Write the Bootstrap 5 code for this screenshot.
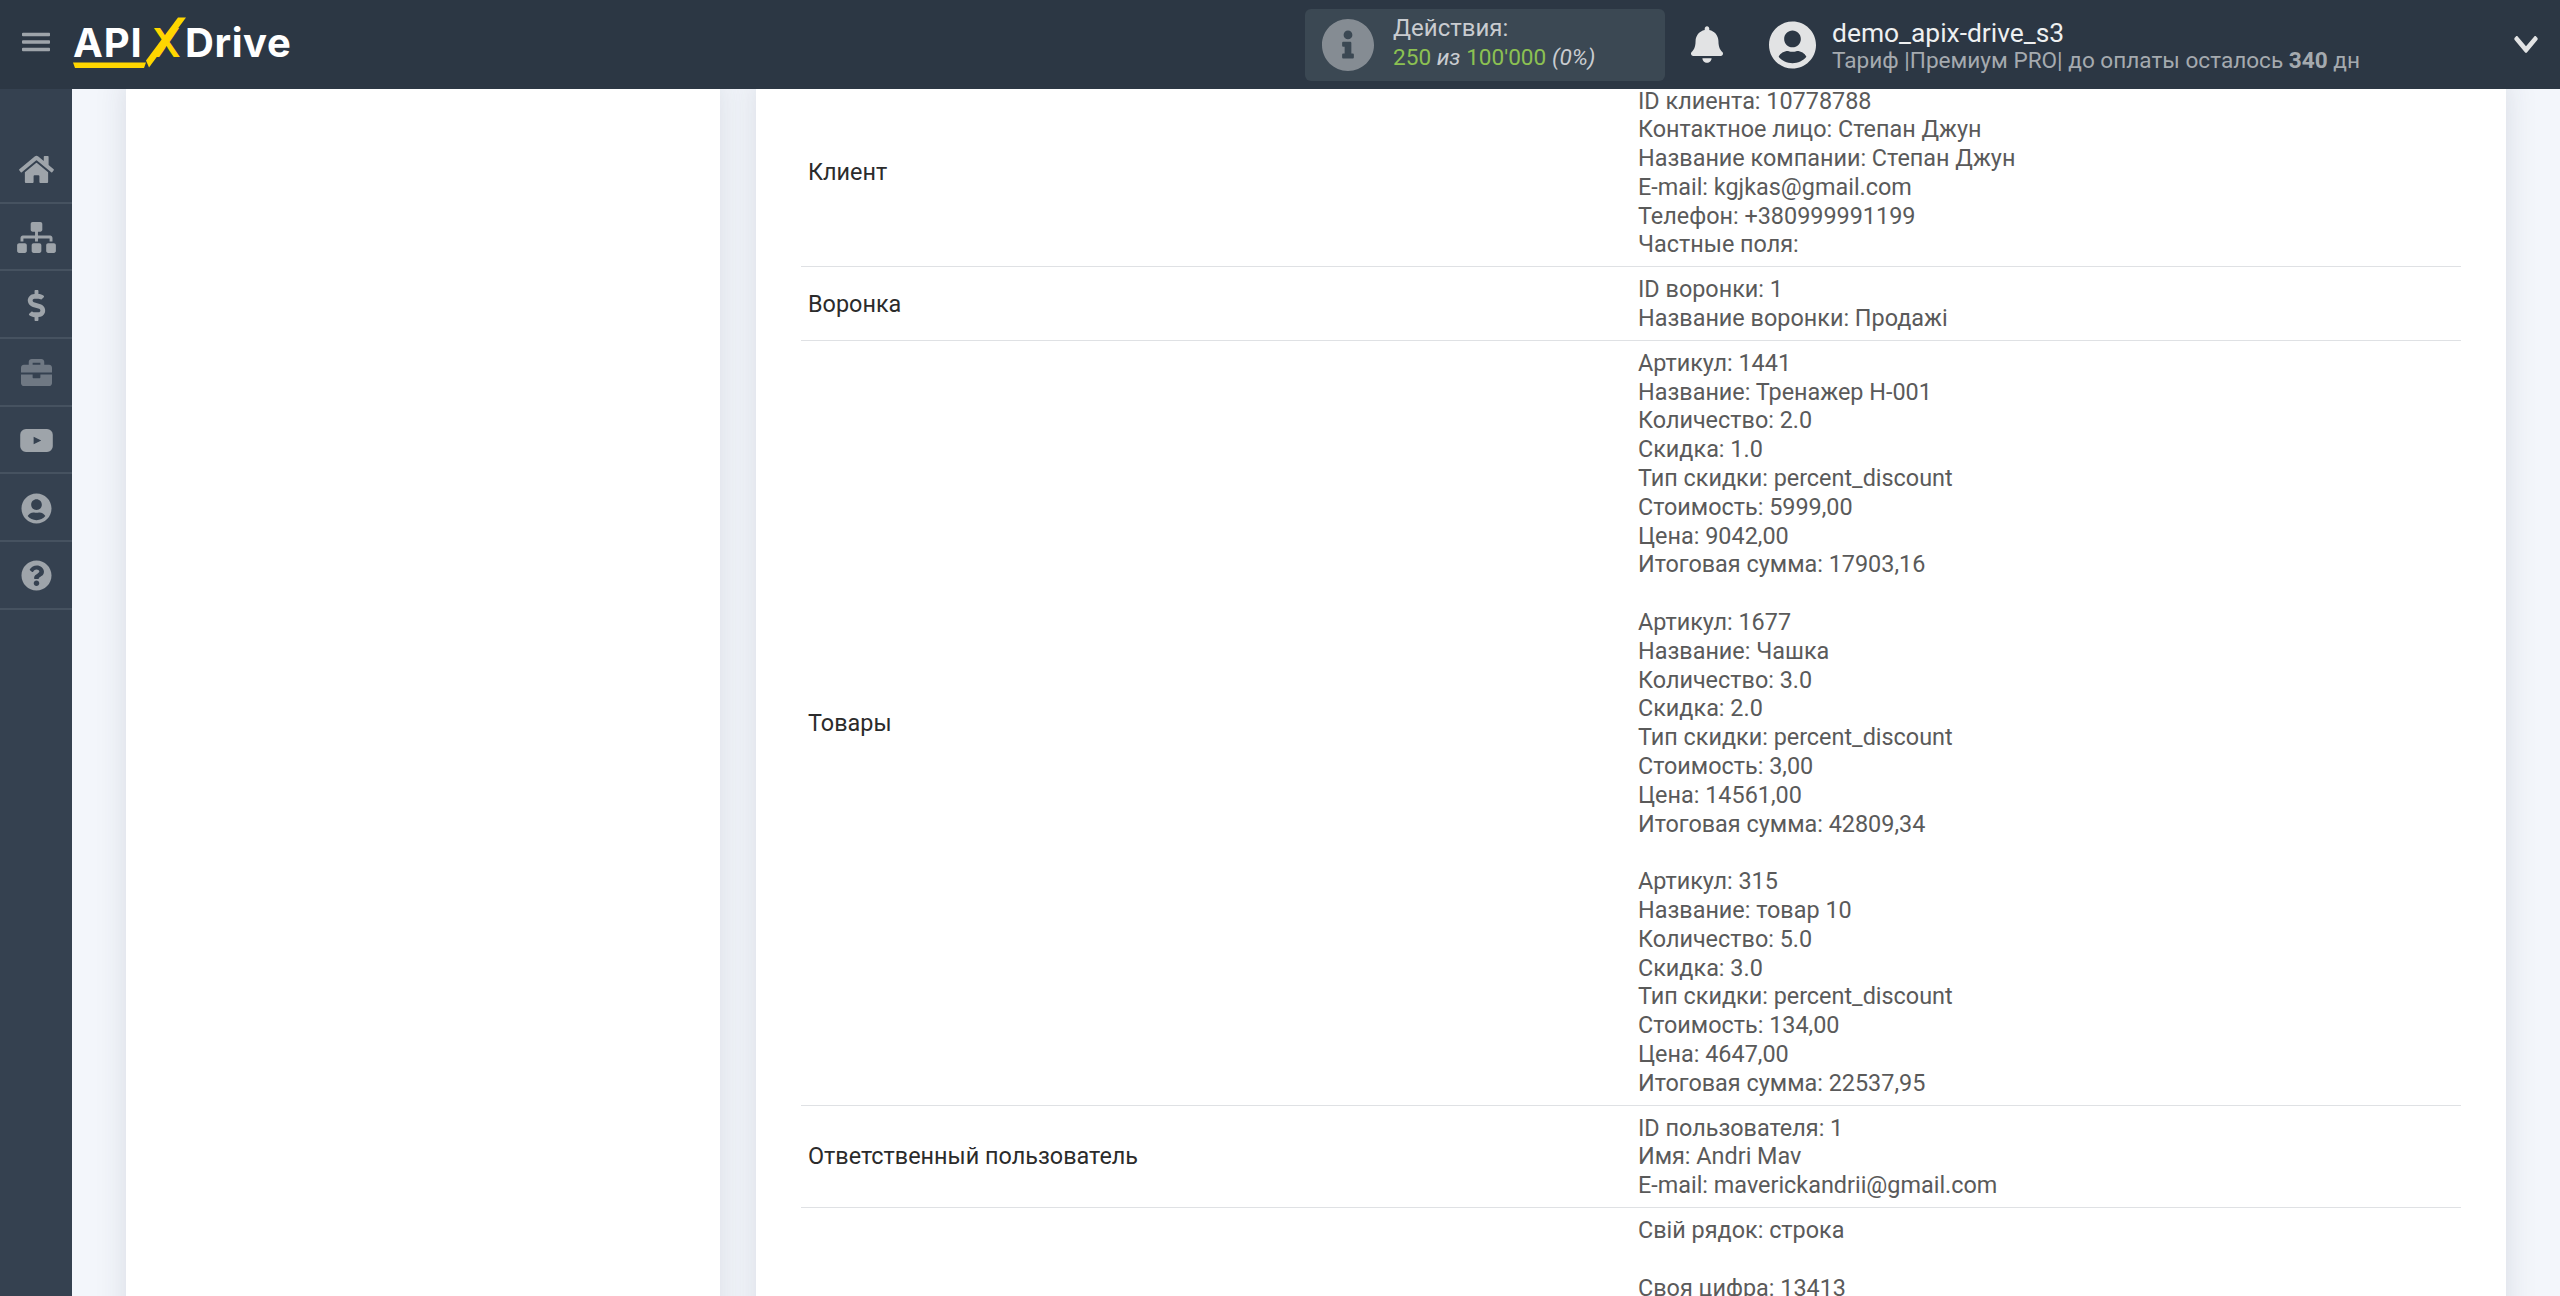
<!DOCTYPE html>
<html lang="ru">
<head>
  <meta charset="UTF-8">
  <meta name="viewport" content="width=device-width, initial-scale=1.0">
  <title>ApiX-Drive</title>
  <link href="https://cdn.jsdelivr.net/npm/bootstrap@5.3.0/dist/css/bootstrap.min.css" rel="stylesheet">
  <style>
    html, body { height: 100%; overflow: hidden; }
    body { font-family: Roboto, "Liberation Sans", sans-serif; background: #f3f6fb; }
    .app-shell { height: 1296px; }
    .top-bar { height: 89px; background: #2c3744; flex: none; position: relative; z-index: 2; }
    .burger { width: 28px; height: 24px; margin: -5px 0 0 22px; fill: #9ea4aa; flex: none; }
    .brand { position: relative; width: 220px; height: 64px; margin-left: 22px; padding-left: 1px; flex: none; font-family: Inter, "Open Sans", sans-serif; font-weight: 700; font-size: 40px; line-height: 60px; color: #fff; }
    .brand-api { width: 79px; letter-spacing: .8px; }
    .brand-x { width: 33px; color: #ffd600; font-weight: 600; }
    .brand-word { letter-spacing: .6px; }
    .brand-art { position: absolute; left: 0; top: 0; width: 220px; height: 64px; }
    .stat-box { width: 360px; height: 72px; margin-left: 1013px; background: #3b4853; border-radius: 6px; padding-left: 17px; flex: none; }
    .stat-icon { width: 52px; height: 52px; fill: #858c93; flex: none; }
    .stat-text { margin-left: 19px; padding-bottom: 3px; font-size: 22.6px; line-height: 29px; color: #c9ccd0; }
    .stat-title { font-size: 24px; }
    .stat-num { color: #8cc152; }
    .bell { width: 32px; height: 37px; margin-left: 26px; fill: #e2e3e4; flex: none; }
    .avatar { width: 47px; height: 48px; margin-left: 46px; fill: #e2e3e4; flex: none; }
    .user-text { margin-left: 16px; padding-top: 4px; line-height: 27px; }
    .user-name { font-size: 26.4px; color: #eef0f1; }
    .user-plan { font-size: 22.6px; color: #a5aaaf; }
    .chevron { width: 24px; height: 33px; margin-left: auto; margin-right: 22px; fill: #e2e3e4; flex: none; }
    .side-bar { width: 72px; background: #354150; padding-top: 47px; flex: none; }
    .side-item { height: 67.7px; padding-top: 2px; border-bottom: 2px solid #465260; }
    .side-icon { fill: #9ea4aa; height: 31px; width: 39px; }
    .side-icon.dim { fill: #6f7883; }
    .side-icon.video { height: 23px; width: 33px; }
    .page-area { overflow: hidden; padding: 0 54px; }
    .scrolled { margin-top: -10.5px; gap: 36px; }
    .side-card, .main-card { background: #fff; box-shadow: 0 0 30px rgba(40, 50, 70, .13); min-height: 1300px; }
    .side-card { width: 594px; flex: none; }
    .main-card { flex: 1 1 auto; padding: 0 45px; }
    .info-table { margin: 0; font-size: 23.4px; line-height: 28.8px; table-layout: fixed; }
    .info-table td { padding: 8px 7px 7px; border-bottom: 1px solid #dfe1e4; vertical-align: middle; }
    .info-table tr:last-child td { border-bottom: 0; }
    .info-label { color: #2b2b2b; }
    .info-value { color: #5a5a5a; }
  </style>
</head>
<body>
  <div class="app-shell d-flex flex-column">
    <header class="top-bar d-flex align-items-center">
      <svg class="burger" viewBox="0 0 448 512" preserveAspectRatio="none"><path d="M16 132h416c8.837 0 16-7.163 16-16V76c0-8.837-7.163-16-16-16H16C7.163 60 0 67.163 0 76v40c0 8.837 7.163 16 16 16zm0 160h416c8.837 0 16-7.163 16-16v-40c0-8.837-7.163-16-16-16H16c-8.837 0-16 7.163-16 16v40c0 8.837 7.163 16 16 16zm0 160h416c8.837 0 16-7.163 16-16v-40c0-8.837-7.163-16-16-16H16c-8.837 0-16 7.163-16 16v40c0 8.837 7.163 16 16 16z"/></svg>
      <div class="brand d-flex">
        <span class="brand-api">API</span><span class="brand-x">X</span><span class="brand-word">Drive</span>
        <svg class="brand-art" viewBox="0 0 220 64"><polygon points="1,49.5 74,49.5 72,55 3,55" fill="#ffd600"/><polygon points="106,4.5 114,4.5 77,54.5 74,47.5" fill="#ffd600"/></svg>
      </div>
      <div class="stat-box d-flex align-items-center">
        <svg class="stat-icon" viewBox="8 8 496 496"><path d="M256 8C119.043 8 8 119.083 8 256c0 136.997 111.043 248 248 248s248-111.003 248-248C504 119.083 392.957 8 256 8zm0 110c23.196 0 42 18.804 42 42s-18.804 42-42 42-42-18.804-42-42 18.804-42 42-42zm56 254c0 6.627-5.373 12-12 12h-88c-6.627 0-12-5.373-12-12v-24c0-6.627 5.373-12 12-12h12v-64h-12c-6.627 0-12-5.373-12-12v-24c0-6.627 5.373-12 12-12h64c6.627 0 12 5.373 12 12v100h12c6.627 0 12 5.373 12 12v24z"/></svg>
        <div class="stat-text">
          <div class="stat-title">Действия:</div>
          <div><span class="stat-num">250</span> <em>из</em> <span class="stat-num">100'000</span> <em>(0%)</em></div>
        </div>
      </div>
      <svg class="bell" viewBox="0 0 448 512"><path d="M224 512c35.32 0 63.97-28.65 63.97-64H160.03c0 35.35 28.65 64 63.97 64zm215.39-149.71c-19.32-20.76-55.47-51.99-55.47-154.29 0-77.7-54.48-139.9-127.94-155.16V32c0-17.67-14.32-32-31.98-32s-31.98 14.33-31.98 32v20.84C118.56 68.1 64.08 130.3 64.08 208c0 102.3-36.15 133.53-55.47 154.29-6 6.45-8.66 14.16-8.61 21.71.11 16.4 12.98 32 32.1 32h383.8c19.12 0 32-15.6 32.1-32 .05-7.55-2.61-15.27-8.61-21.71z"/></svg>
      <svg class="avatar" viewBox="0 8 496 496"><path d="M248 8C111 8 0 119 0 256s111 248 248 248 248-111 248-248S385 8 248 8zm0 96c48.6 0 88 39.4 88 88s-39.4 88-88 88-88-39.4-88-88 39.4-88 88-88zm0 344c-58.7 0-111.3-26.6-146.5-68.2 18.8-35.4 55.6-59.8 98.5-59.8 2.4 0 4.8.4 7.1 1.1 13 4.2 26.6 6.9 40.9 6.9 14.3 0 28-2.7 40.9-6.9 2.3-.7 4.7-1.1 7.1-1.1 42.9 0 79.7 24.4 98.5 59.8C359.3 421.4 306.7 448 248 448z"/></svg>
      <div class="user-text">
        <div class="user-name">demo_apix-drive_s3</div>
        <div class="user-plan">Тариф |Премиум PRO| до оплаты осталось <b>340</b> дн</div>
      </div>
      <svg class="chevron" viewBox="0 0 448 512" preserveAspectRatio="none"><path d="M207.029 381.476L12.686 187.132c-9.373-9.373-9.373-24.569 0-33.941l22.667-22.667c9.357-9.357 24.522-9.375 33.901-.04L224 284.505l154.745-154.021c9.379-9.335 24.544-9.317 33.901.04l22.667 22.667c9.373 9.373 9.373 24.569 0 33.941L240.971 381.476c-9.373 9.372-24.569 9.372-33.942 0z"/></svg>
    </header>

    <div class="d-flex flex-grow-1 overflow-hidden">
      <nav class="side-bar">
        <div class="side-item d-flex align-items-center justify-content-center">
          <svg class="side-icon" viewBox="0 0 576 512"><path d="M280.37 148.26L96 300.11V464a16 16 0 0 0 16 16l112.06-.29a16 16 0 0 0 15.92-16V368a16 16 0 0 1 16-16h64a16 16 0 0 1 16 16v95.64a16 16 0 0 0 16 16.05L464 480a16 16 0 0 0 16-16V300L295.67 148.26a12.19 12.19 0 0 0-15.3 0zM571.6 251.47L488 182.56V44.05a12 12 0 0 0-12-12h-56a12 12 0 0 0-12 12v72.61L318.47 43a48 48 0 0 0-61 0L4.34 251.47a12 12 0 0 0-1.6 16.9l25.5 31A12 12 0 0 0 45.15 301l235.22-193.74a12.19 12.19 0 0 1 15.3 0L530.9 301a12 12 0 0 0 16.9-1.6l25.5-31a12 12 0 0 0-1.7-16.93z"/></svg>
        </div>
        <div class="side-item d-flex align-items-center justify-content-center">
          <svg class="side-icon" viewBox="0 0 640 512"><path d="M128 352H32c-17.67 0-32 14.33-32 32v96c0 17.67 14.33 32 32 32h96c17.67 0 32-14.33 32-32v-96c0-17.67-14.33-32-32-32zm-24-80h192v48h48v-48h192v48h48v-57.59c0-21.17-17.23-38.41-38.41-38.41H344v-64h40c17.67 0 32-14.33 32-32V32c0-17.67-14.33-32-32-32H256c-17.67 0-32 14.33-32 32v96c0 17.67 14.33 32 32 32h40v64H94.41C73.23 224 56 241.23 56 262.41V320h48v-48zm264 80h-96c-17.67 0-32 14.33-32 32v96c0 17.67 14.33 32 32 32h96c17.67 0 32-14.33 32-32v-96c0-17.67-14.33-32-32-32zm240 0h-96c-17.67 0-32 14.33-32 32v96c0 17.67 14.33 32 32 32h96c17.67 0 32-14.33 32-32v-96c0-17.67-14.33-32-32-32z"/></svg>
        </div>
        <div class="side-item d-flex align-items-center justify-content-center">
          <svg class="side-icon" viewBox="0 0 288 512"><path d="M209.2 233.4l-108-31.6C88.7 198.2 80 186.5 80 173.5c0-16.3 13.2-29.5 29.5-29.5h66.3c12.2 0 24.2 3.7 34.2 10.5 6.1 4.1 14.3 3.1 19.5-2l34.8-34c7.1-6.9 6.1-18.4-1.8-24.5C238 74.8 207.4 64.1 176 64V16c0-8.8-7.2-16-16-16h-32c-8.8 0-16 7.2-16 16v48h-2.5C45.8 64-5.4 118.7.5 183.6c4.2 46.1 39.4 83.6 83.8 96.6l102.5 30c12.5 3.7 21.2 15.3 21.2 28.3 0 16.3-13.2 29.5-29.5 29.5h-66.3C100 368 88 364.3 78 357.5c-6.1-4.1-14.3-3.1-19.5 2l-34.8 34c-7.1 6.9-6.1 18.4 1.8 24.5 24.5 19.2 55.1 29.9 86.5 30v48c0 8.8 7.2 16 16 16h32c8.8 0 16-7.2 16-16v-48.2c46.6-.9 90.3-28.6 105.7-72.7 21.5-61.6-14.6-124.8-72.5-141.7z"/></svg>
        </div>
        <div class="side-item d-flex align-items-center justify-content-center">
          <svg class="side-icon dim" viewBox="0 0 512 512"><path d="M320 336c0 8.84-7.16 16-16 16h-96c-8.84 0-16-7.16-16-16v-48H0v144c0 25.6 22.4 48 48 48h416c25.6 0 48-22.4 48-48V288H320v48zm144-208h-80V80c0-25.6-22.4-48-48-48H176c-25.6 0-48 22.4-48 48v48H48c-25.6 0-48 22.4-48 48v80h512v-80c0-25.6-22.4-48-48-48zm-144 0H192V96h128v32z"/></svg>
        </div>
        <div class="side-item d-flex align-items-center justify-content-center">
          <svg class="side-icon video" viewBox="0 0 34 24"><path fill-rule="evenodd" d="M6 0h22a6 6 0 0 1 6 6v12a6 6 0 0 1-6 6H6a6 6 0 0 1-6-6V6a6 6 0 0 1 6-6zm8 8v8l8-4z"/></svg>
        </div>
        <div class="side-item d-flex align-items-center justify-content-center">
          <svg class="side-icon" viewBox="0 0 496 512"><path d="M248 8C111 8 0 119 0 256s111 248 248 248 248-111 248-248S385 8 248 8zm0 96c48.6 0 88 39.4 88 88s-39.4 88-88 88-88-39.4-88-88 39.4-88 88-88zm0 344c-58.7 0-111.3-26.6-146.5-68.2 18.8-35.4 55.6-59.8 98.5-59.8 2.4 0 4.8.4 7.1 1.1 13 4.2 26.6 6.9 40.9 6.9 14.3 0 28-2.7 40.9-6.9 2.3-.7 4.7-1.1 7.1-1.1 42.9 0 79.7 24.4 98.5 59.8C359.3 421.4 306.7 448 248 448z"/></svg>
        </div>
        <div class="side-item d-flex align-items-center justify-content-center">
          <svg class="side-icon" viewBox="0 0 512 512"><path d="M504 256c0 136.997-111.043 248-248 248S8 392.997 8 256C8 119.083 119.043 8 256 8s248 111.083 248 248zM262.655 90c-54.497 0-89.255 22.957-116.549 63.758-3.536 5.286-2.353 12.415 2.715 16.258l34.699 26.31c5.205 3.947 12.621 3.008 16.665-2.122 17.864-22.658 30.113-35.797 57.303-35.797 20.429 0 45.698 13.148 45.698 32.958 0 14.976-12.363 22.667-32.534 33.976C247.128 238.528 216 254.941 216 296v4c0 6.627 5.373 12 12 12h56c6.627 0 12-5.373 12-12v-1.333c0-28.462 83.186-29.647 83.186-106.667 0-58.002-60.165-102-116.531-102zM256 338c-25.365 0-46 20.635-46 46 0 25.364 20.635 46 46 46s46-20.636 46-46c0-25.365-20.635-46-46-46z"/></svg>
        </div>
      </nav>

      <main class="page-area flex-grow-1">
        <div class="scrolled d-flex">
          <aside class="side-card"></aside>
          <section class="main-card">
            <table class="table info-table">
              <tbody>
                <tr>
                  <td class="info-label">Клиент</td>
                  <td class="info-value">ID клиента: 10778788<br>Контактное лицо: Степан Джун<br>Название компании: Степан Джун<br>E-mail: kgjkas@gmail.com<br>Телефон: +380999991199<br>Частные поля:</td>
                </tr>
                <tr>
                  <td class="info-label">Воронка</td>
                  <td class="info-value">ID воронки: 1<br>Название воронки: Продажі</td>
                </tr>
                <tr>
                  <td class="info-label">Товары</td>
                  <td class="info-value">Артикул: 1441<br>Название: Тренажер Н-001<br>Количество: 2.0<br>Скидка: 1.0<br>Тип скидки: percent_discount<br>Стоимость: 5999,00<br>Цена: 9042,00<br>Итоговая сумма: 17903,16<br><br>Артикул: 1677<br>Название: Чашка<br>Количество: 3.0<br>Скидка: 2.0<br>Тип скидки: percent_discount<br>Стоимость: 3,00<br>Цена: 14561,00<br>Итоговая сумма: 42809,34<br><br>Артикул: 315<br>Название: товар 10<br>Количество: 5.0<br>Скидка: 3.0<br>Тип скидки: percent_discount<br>Стоимость: 134,00<br>Цена: 4647,00<br>Итоговая сумма: 22537,95</td>
                </tr>
                <tr>
                  <td class="info-label">Ответственный пользователь</td>
                  <td class="info-value">ID пользователя: 1<br>Имя: Andri Mav<br>E-mail: maverickandrii@gmail.com</td>
                </tr>
                <tr>
                  <td class="info-label"></td>
                  <td class="info-value">Свій рядок: строка<br><br>Своя цифра: 13413</td>
                </tr>
              </tbody>
            </table>
          </section>
        </div>
      </main>
    </div>
  </div>
  <script src="https://cdn.jsdelivr.net/npm/bootstrap@5.3.0/dist/js/bootstrap.bundle.min.js"></script>
</body>
</html>
